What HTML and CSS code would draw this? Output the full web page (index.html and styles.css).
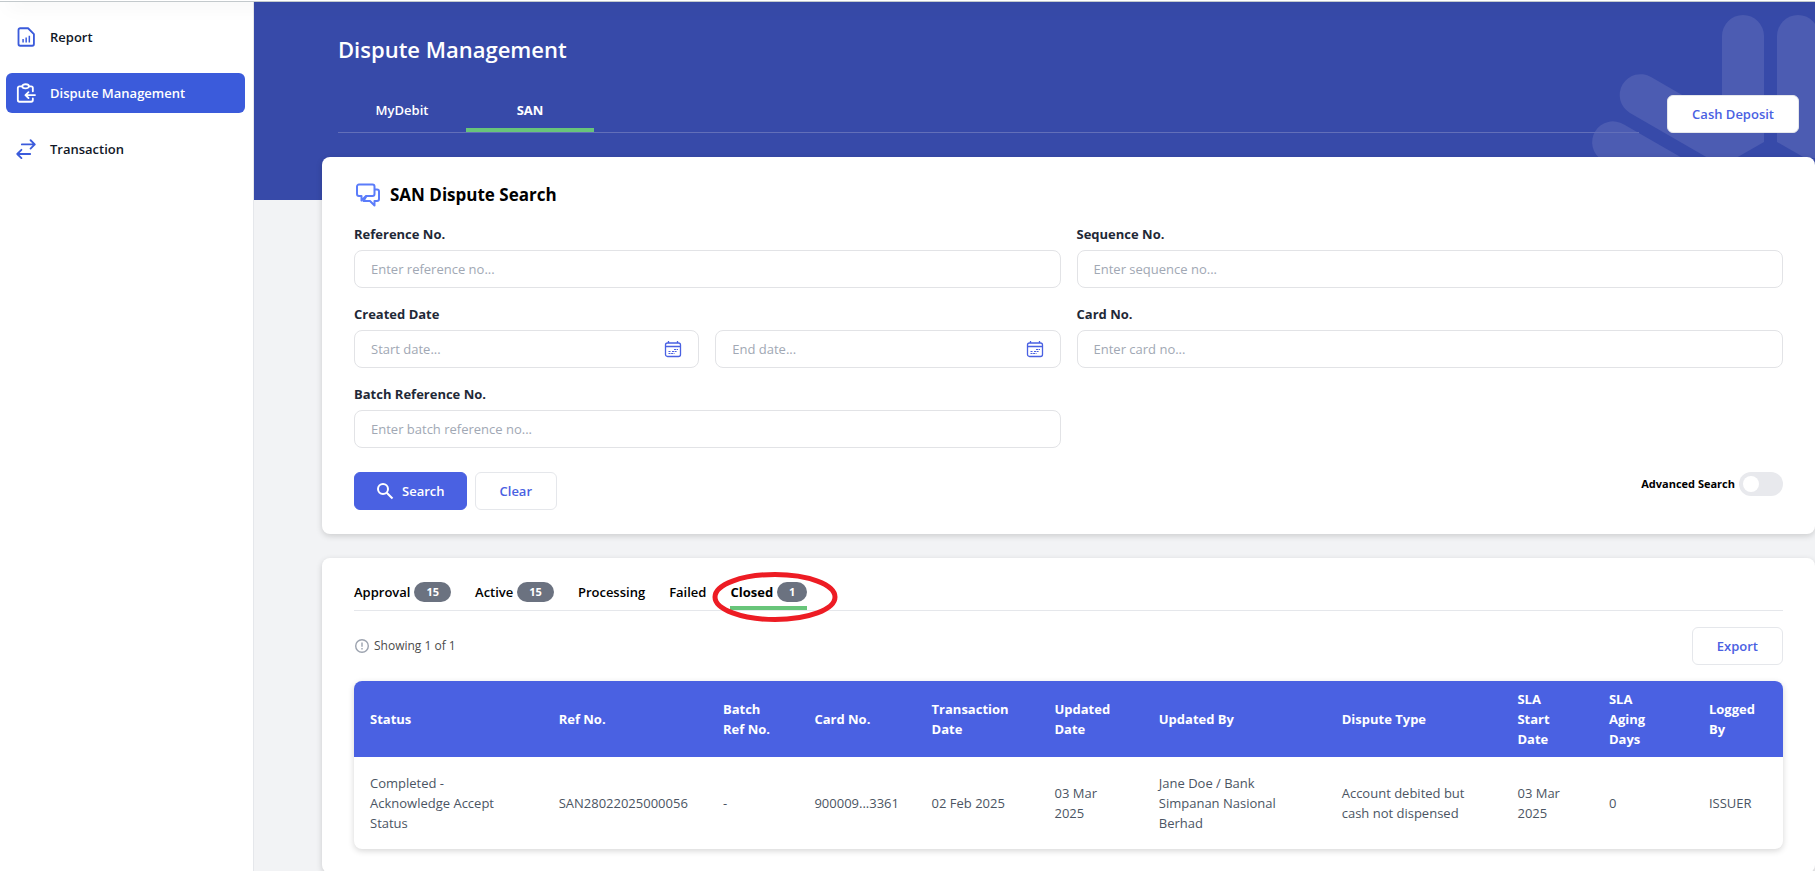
FILE: index.html
```html
<!DOCTYPE html>
<html lang="en">
<head>
<meta charset="utf-8">
<meta name="viewport" content="width=device-width, initial-scale=1">
<title>Dispute Management</title>
<link rel="stylesheet" href="styles.css">
</head>
<body>
<div class="topbar"></div>
<div class="app">
  <nav class="sidebar" aria-label="Main">
    <a class="nav-item" href="#">
      <svg class="nav-icon" viewBox="0 0 24 24" fill="none" stroke="currentColor" stroke-width="2.200" stroke-linejoin="round"><path d="M5 1.500h9.500L21.500 8.500v12a2 2 0 0 1-2 2H5a2 2 0 0 1-2-2v-17a2 2 0 0 1 2-2z"/><path d="M8.500 14.500V18.500M12.200 12.500V18.500M16 10.500V18.500" stroke-width="1.800"/></svg>
      Report
    </a>
    <a class="nav-item nav-item-active" href="#" aria-current="page">
      <svg class="nav-icon" viewBox="0 0 24 24" fill="none" stroke="currentColor" stroke-width="2.200" stroke-linejoin="round" stroke-linecap="round"><path d="M7.500 4H4.200a2 2 0 0 0-2 2v14.500a2 2 0 0 0 2 2h14a2 2 0 0 0 2-2v-2M15.500 4h2.700a2 2 0 0 1 2 2v4"/><ellipse cx="11.500" cy="4" rx="4" ry="2.500"/><path d="M22.800 14.500h-11.300M15 11l-3.700 3.500L15 18"/></svg>
      Dispute Management
    </a>
    <a class="nav-item" href="#">
      <svg class="nav-icon" viewBox="0 0 24 24" fill="none" stroke="currentColor" stroke-width="2.200" stroke-linejoin="round" stroke-linecap="round"><path d="M7 6.500H22.500M17.500 1.500L22.500 6.500 17.500 11.500M17 18H1.500M6.500 13L1.500 18 6.500 23"/></svg>
      Transaction
    </a>
  </nav>

  <main class="main">
    <header class="hero">
      <svg class="hero-art" viewBox="0 0 255 200" width="255" height="200" aria-hidden="true"><path d="M162 116V34a21 21 0 0 1 42 0V140L176 156H148L70 111A20 20 0 0 1 91 75Z"/><path d="M217 140V34a21 21 0 0 1 42 0V156H245Z"/><path d="M42 158A20.500 20.500 0 0 1 64 122.500L124 157V170H42Z"/></svg>
      <h1 class="hero-title">Dispute Management</h1>
      <div class="hero-row">
        <div class="hero-tabs" role="tablist">
          <button class="hero-tab" type="button" role="tab">MyDebit</button>
          <button class="hero-tab hero-tab-active" type="button" role="tab" aria-selected="true">SAN</button>
        </div>
        <button class="btn btn-outline" type="button">Cash Deposit</button>
      </div>
    </header>

    <div class="content">
      <section class="card">
        <h2 class="card-title">
          <svg class="card-icon" viewBox="0 0 24 24" fill="none" stroke="currentColor" stroke-width="2" stroke-linejoin="round"><path d="M3 1.500h13.500a2 2 0 0 1 2 2V11a2 2 0 0 1-2 2H10l-4.500 4.500V13H3a2 2 0 0 1-2-2V3.500a2 2 0 0 1 2-2z"/><path d="M18.500 6.500H21a2 2 0 0 1 2 2V16a2 2 0 0 1-2 2h-2.500v4.500L14 18H7.500l3-5"/></svg>
          SAN Dispute Search
        </h2>
        <form>
          <div class="fields">
            <div class="field">
              <label for="ref">Reference No.</label>
              <div class="box"><input id="ref" type="text" placeholder="Enter reference no..."></div>
            </div>
            <div class="field">
              <label for="seq">Sequence No.</label>
              <div class="box"><input id="seq" type="text" placeholder="Enter sequence no..."></div>
            </div>
            <div class="field">
              <label for="start">Created Date</label>
              <div class="dates">
                <div class="box">
                  <input id="start" type="text" placeholder="Start date...">
                  <svg class="cal" viewBox="0 0 18 18" fill="none" stroke="currentColor"><rect x="1.500" y="3" width="15" height="13.500" rx="2" stroke-width="1.300"/><path d="M1.500 6.500h15M4.500 1v2M13.500 1v2" stroke-width="1.300"/><path d="M10 9.500h4M8 11.500h5M4.500 11.500h2M4.500 13.500h6" stroke-dasharray="2 .600"/></svg>
                </div>
                <div class="box">
                  <input id="end" type="text" placeholder="End date..." aria-label="End date">
                  <svg class="cal" viewBox="0 0 18 18" fill="none" stroke="currentColor"><rect x="1.500" y="3" width="15" height="13.500" rx="2" stroke-width="1.300"/><path d="M1.500 6.500h15M4.500 1v2M13.500 1v2" stroke-width="1.300"/><path d="M10 9.500h4M8 11.500h5M4.500 11.500h2M4.500 13.500h6" stroke-dasharray="2 .600"/></svg>
                </div>
              </div>
            </div>
            <div class="field">
              <label for="card">Card No.</label>
              <div class="box"><input id="card" type="text" placeholder="Enter card no..."></div>
            </div>
            <div class="field">
              <label for="batch">Batch Reference No.</label>
              <div class="box"><input id="batch" type="text" placeholder="Enter batch reference no..."></div>
            </div>
          </div>
          <div class="actions">
            <button class="btn btn-primary" type="button">
              <svg class="search-icon" viewBox="0 0 18 18" fill="none" stroke="currentColor" stroke-width="2"><circle cx="7" cy="7" r="5"/><path d="M10.700 10.700L16.500 16.500"/></svg>
              Search
            </button>
            <button class="btn btn-outline" type="button">Clear</button>
            <label class="switch">Advanced Search<input type="checkbox" role="switch"></label>
          </div>
        </form>
      </section>

      <section class="card">
        <div class="tabs" role="tablist">
          <button class="tab" type="button" role="tab">Approval<span class="badge">15</span></button>
          <button class="tab" type="button" role="tab">Active<span class="badge">15</span></button>
          <button class="tab" type="button" role="tab">Processing</button>
          <button class="tab" type="button" role="tab">Failed</button>
          <button class="tab tab-active" type="button" role="tab" aria-selected="true">Closed<span class="badge">1</span>
            <svg class="marker" viewBox="0 0 126 52" width="126" height="52" fill="none" stroke="#ed1c24" stroke-width="5" aria-hidden="true"><ellipse cx="63" cy="26" rx="60" ry="22.500"/></svg>
          </button>
        </div>
        <div class="toolbar">
          <p class="count">
            <svg class="info" viewBox="0 0 16 16" fill="none" stroke="currentColor" stroke-width="1.400"><circle cx="8" cy="8" r="6.300"/><path d="M8 4.500v4.300M8 10v1.500"/></svg>
            Showing 1 of 1
          </p>
          <button class="btn btn-outline" type="button">Export</button>
        </div>
        <table class="table">
          <colgroup><col class="c-status"><col class="c-ref"><col class="c-batch"><col class="c-card"><col class="c-trans"><col class="c-updated"><col class="c-by"><col class="c-type"><col class="c-sla"><col class="c-aging"><col class="c-logged"></colgroup>
          <thead>
            <tr><th>Status</th><th>Ref No.</th><th>Batch Ref No.</th><th>Card No.</th><th>Transaction Date</th><th>Updated Date</th><th>Updated By</th><th>Dispute Type</th><th>SLA<br>Start<br>Date</th><th>SLA<br>Aging<br>Days</th><th>Logged By</th></tr>
          </thead>
          <tbody>
            <tr><td>Completed - Acknowledge Accept Status</td><td class="nowrap">SAN28022025000056</td><td>-</td><td>900009...3361</td><td>02 Feb 2025</td><td>03 Mar<br>2025</td><td>Jane Doe / Bank Simpanan Nasional Berhad</td><td>Account debited but cash not dispensed</td><td>03 Mar<br>2025</td><td>0</td><td>ISSUER</td></tr>
          </tbody>
        </table>
      </section>
    </div>
  </main>
</div>
</body>
</html>
```
FILE: styles.css
```css
*, *::before, *::after { box-sizing: border-box; }

body {
  margin: 0;
  height: 100vh;
  display: flex;
  flex-direction: column;
  overflow: hidden;
  background: #f2f3f5;
  color: #000;
  font: 13px/20px "Open Sans", "Noto Sans", sans-serif;
}

h1, h2, p { margin: 0; }
button, input { font: inherit; }
button { cursor: pointer; }

.topbar {
  position: relative;
  z-index: 2;
  flex: none;
  height: 2px;
  background: #fff;
  border-bottom: 1px solid #c3c9cc;
  box-shadow: 8px 2px 18px rgba(0, 0, 0, .22);
}

.app { flex: 1; min-height: 0; display: flex; }

/* Sidebar */
.sidebar {
  flex: none;
  width: 254px;
  padding: 15px 8px 0 6px;
  display: flex;
  flex-direction: column;
  gap: 16px;
  background: #fff;
  border-right: 1px solid #e5e7eb;
}
.nav-item {
  display: flex;
  align-items: center;
  gap: 14px;
  height: 40px;
  padding: 0 10px;
  border-radius: 6px;
  color: #111827;
  font-weight: 600;
  text-decoration: none;
}
.nav-icon { width: 20px; height: 20px; color: #3b5bdb; }
.nav-item-active { background: #3b5bdb; color: #fff; }
.nav-item-active .nav-icon { color: #fff; }

/* Page header */
.main { flex: 1; min-width: 0; overflow: hidden; }
.hero {
  position: relative;
  min-height: 198px;
  padding: 32px 16px 0 84px;
  background: #374aa9;
  overflow: hidden;
}
.hero-art { position: absolute; top: 0; right: 0; fill: #4c5cb2; }
.hero-title { color: #fff; font-size: 22px; line-height: 30px; font-weight: 600; }
.hero-row {
  position: relative;
  display: flex;
  align-items: flex-end;
  gap: 28px;
  margin-top: 24px;
}
.hero-tabs { flex: 1; display: flex; border-bottom: 1px solid #626fb9; }
.hero-tab {
  width: 128px;
  padding: 12px 0 8px;
  border: 0;
  border-bottom: 4px solid transparent;
  background: none;
  color: #fff;
  font-weight: 600;
}
.hero-tab-active { border-color: #68c57a; font-weight: 700; }

/* Buttons */
.btn {
  display: inline-flex;
  align-items: center;
  justify-content: center;
  height: 38px;
  padding: 0 24px;
  border: 1px solid #e5e7eb;
  border-radius: 6px;
  font-weight: 600;
}
.btn-outline { background: #fff; color: #4a61e2; }
.btn-primary { gap: 8px; padding: 0 21px; border-color: #4a61e2; background: #4a61e2; color: #fff; }
.search-icon { width: 18px; height: 18px; }

/* Cards */
.content {
  position: relative;
  display: flex;
  flex-direction: column;
  gap: 24px;
  margin-top: -43px;
  padding-left: 68px;
}
.card {
  padding: 24px 32px;
  border-radius: 8px;
  background: #fff;
  box-shadow: 0 2px 6px rgba(0, 0, 0, .16);
}
.card-title {
  display: flex;
  align-items: center;
  gap: 10px;
  margin-bottom: 14px;
  padding: 0 2px 1px;
  font-size: 17px;
  line-height: 28px;
  font-weight: 700;
}
.card-icon { width: 24px; height: 24px; color: #5b7cfa; }

/* Search form */
.fields { display: grid; grid-template-columns: 1fr 1fr; gap: 16px; }
.field { display: flex; flex-direction: column; gap: 6px; }
.field label { color: #1f2937; font-weight: 700; }
.dates { display: grid; grid-template-columns: 1fr 1fr; gap: 16px; }
.box {
  display: flex;
  align-items: center;
  height: 38px;
  padding: 0 16px;
  border: 1px solid #e2e3e6;
  border-radius: 8px;
  background: #fff;
}
.box input {
  flex: 1;
  min-width: 0;
  padding: 0;
  border: 0;
  outline: 0;
  background: none;
  color: #1f2937;
}
.box input::placeholder { color: #a1a8b4; opacity: 1; }
.cal { width: 18px; height: 18px; color: #4a61e2; }
.actions { display: flex; gap: 8px; margin-top: 24px; }
.switch {
  display: flex;
  align-items: center;
  gap: 4px;
  height: 24px;
  margin-left: auto;
  font-size: 11px;
  font-weight: 700;
}
.switch input {
  appearance: none;
  width: 44px;
  height: 24px;
  margin: 0;
  padding: 4px;
  border-radius: 12px;
  background: #e8e9ed;
}
.switch input::before {
  content: "";
  display: block;
  width: 16px;
  height: 16px;
  border-radius: 50%;
  background: #fff;
}
.switch input:checked { background: #4a61e2; }
.switch input:checked::before { margin-left: auto; }

/* Result tabs */
.tabs { display: flex; gap: 24px; border-bottom: 1px solid #e5e7eb; }
.tab {
  position: relative;
  display: flex;
  align-items: center;
  gap: 4px;
  padding: 0 0 4px;
  border: 0;
  border-bottom: 4px solid transparent;
  background: none;
  color: #000;
  font-weight: 600;
}
.tab-active { border-color: #68c57a; font-weight: 700; }
.badge {
  padding: 0 12px;
  border-radius: 10px;
  background: #6b7280;
  color: #fff;
  font-size: 11px;
  font-weight: 700;
}
.marker { position: absolute; top: -11px; left: -18px; pointer-events: none; }

.toolbar {
  display: flex;
  align-items: center;
  justify-content: space-between;
  margin: 16px 0;
}
.count { display: flex; align-items: center; gap: 4px; color: #4b4b4b; font-size: 12px; }
.info { width: 16px; height: 16px; color: #9ca3af; }

/* Table */
.table {
  width: 100%;
  table-layout: fixed;
  border-spacing: 0;
  border-radius: 8px;
  overflow: hidden;
  background: #fff;
  box-shadow: 0 2px 6px rgba(0, 0, 0, .16);
  text-align: left;
}
.table th { padding: 8px 16px; background: #4a61e2; color: #fff; font-weight: 700; }
.table td { padding: 16px; color: #4b5563; }
.table .nowrap { white-space: nowrap; }
.c-status { width: 13.2%; }
.c-ref { width: 11.5%; }
.c-batch { width: 6.4%; }
.c-card { width: 8.2%; }
.c-trans { width: 8.6%; }
.c-updated { width: 7.3%; }
.c-by { width: 12.8%; }
.c-type { width: 12.3%; }
.c-sla { width: 6.4%; }
.c-aging { width: 7%; }
.c-logged { width: 6.3%; }
```
